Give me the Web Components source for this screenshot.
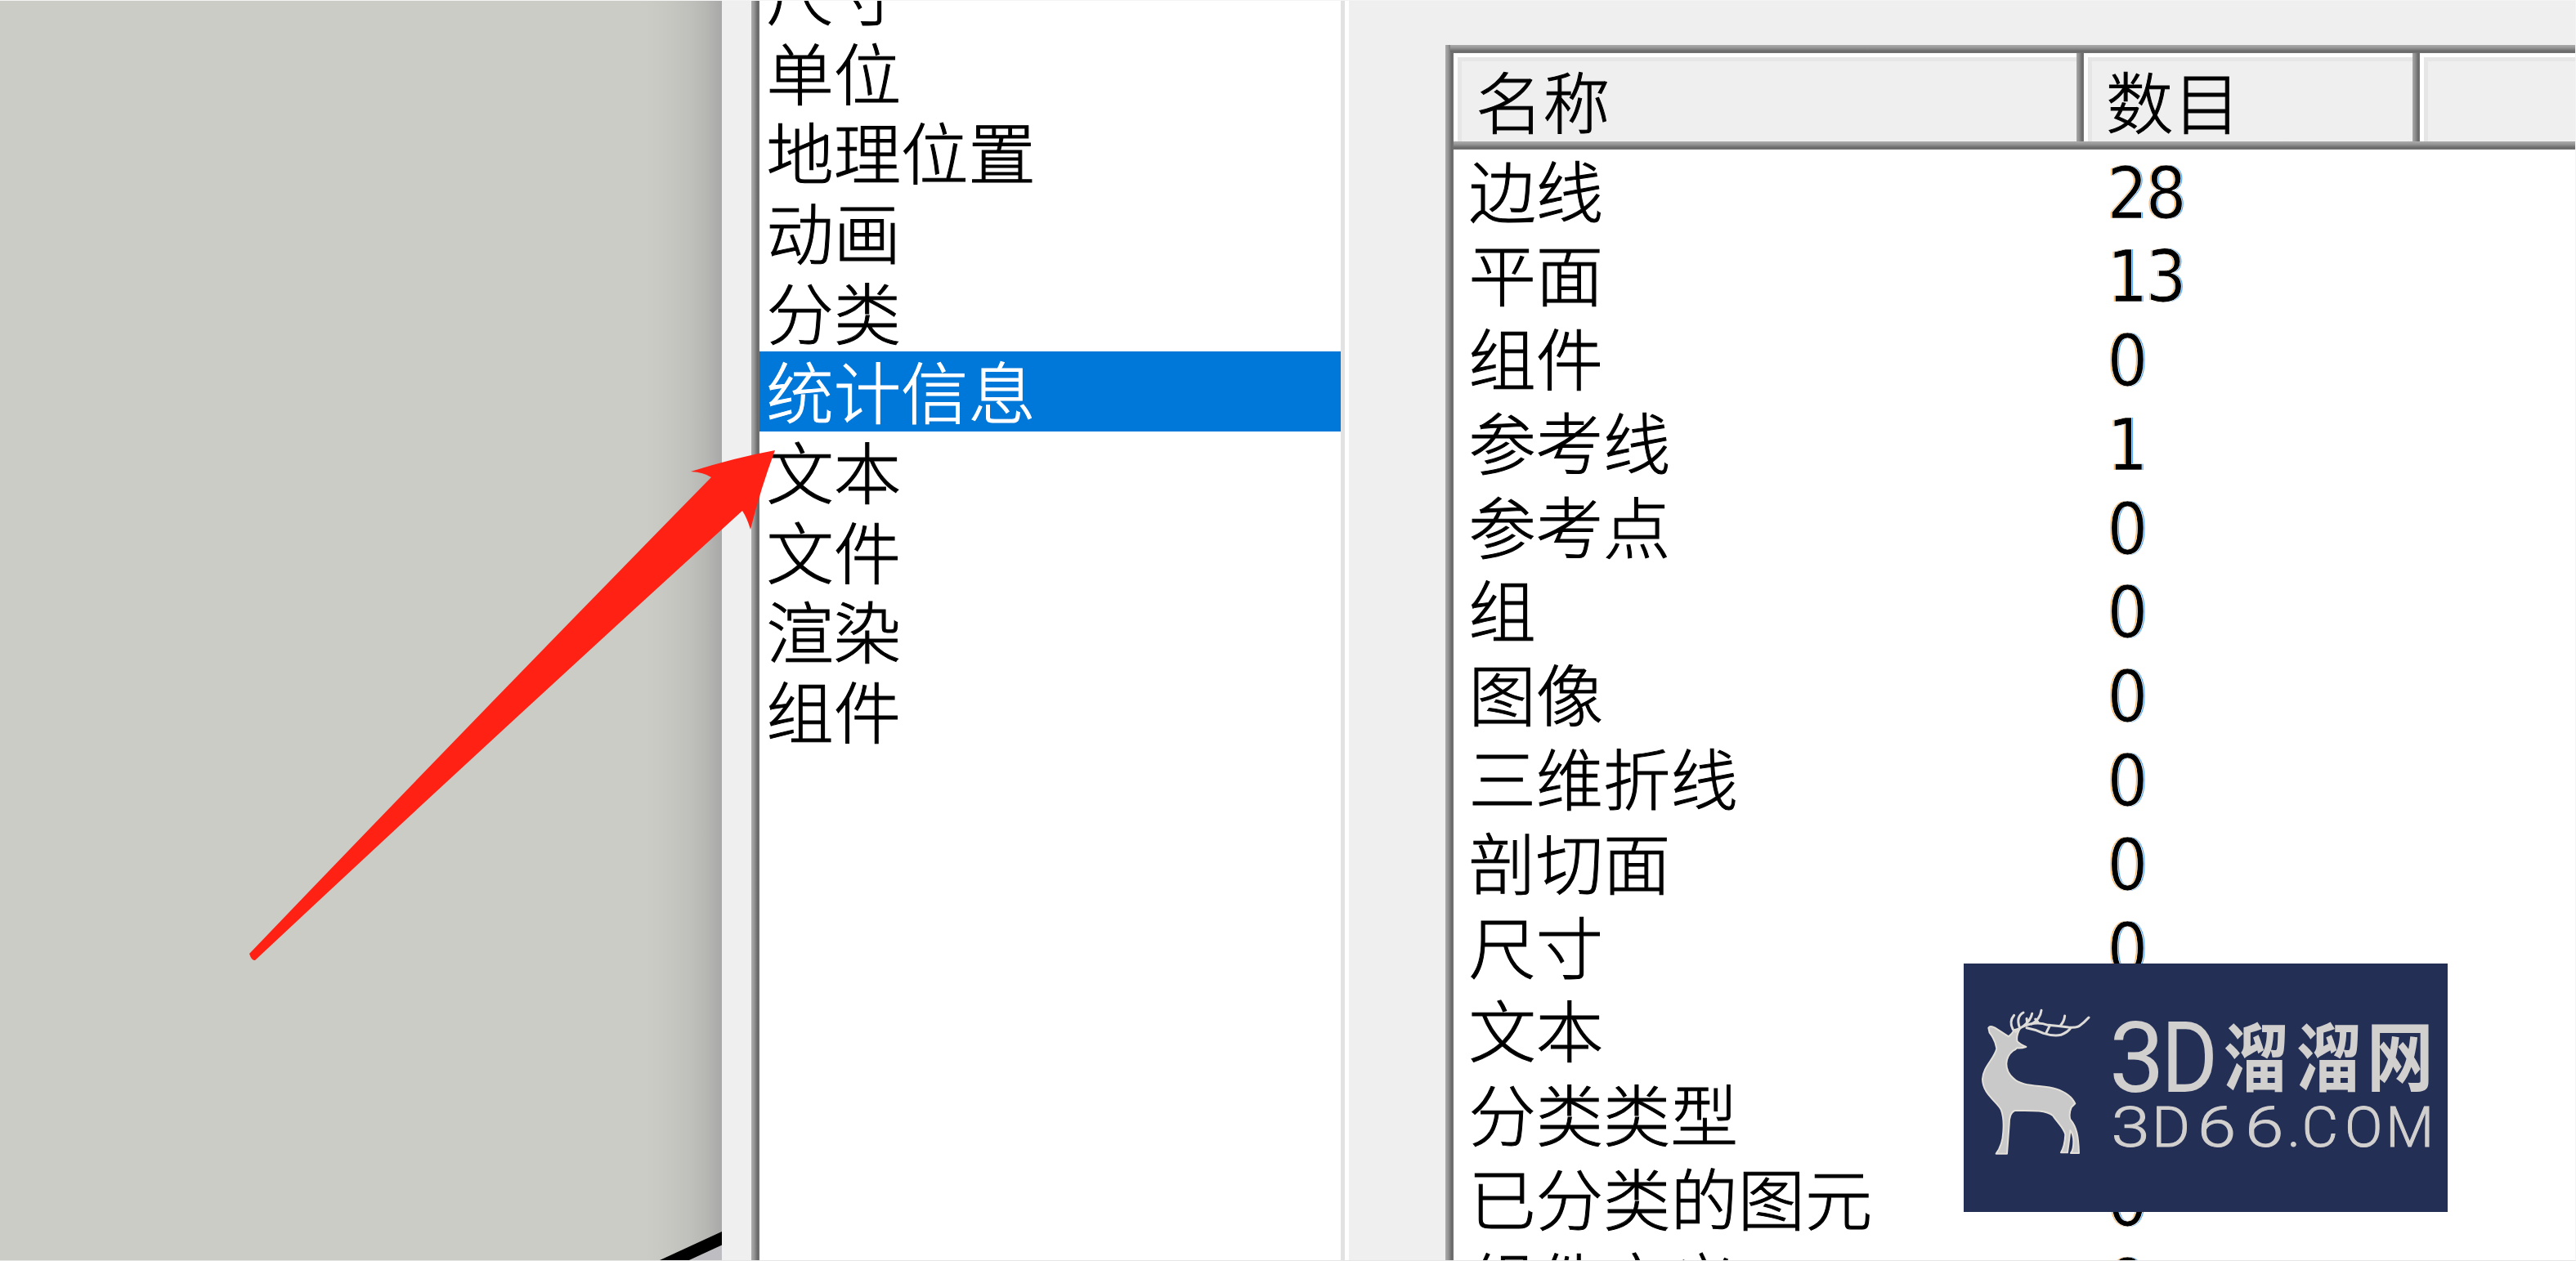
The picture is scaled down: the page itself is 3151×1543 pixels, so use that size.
<!DOCTYPE html>
<html lang="zh-CN">
<head>
<meta charset="utf-8">
<title>统计信息</title>
<style>
html,body{margin:0;height:100%;overflow:hidden;background:#efefef}
</style>
</head>
<body>
<model-window>
  <model-viewport></model-viewport>
  <category-list>
    <category-item>尺寸</category-item>
    <category-item>单位</category-item>
    <category-item>地理位置</category-item>
    <category-item>动画</category-item>
    <category-item>分类</category-item>
    <category-item selected>统计信息</category-item>
    <category-item>文本</category-item>
    <category-item>文件</category-item>
    <category-item>渲染</category-item>
    <category-item>组件</category-item>
  </category-list>
  <pane-divider></pane-divider>
  <stats-table>
    <header-cell slot="head" class="name">名称</header-cell>
    <header-cell slot="head" class="count">数目</header-cell>
    <header-cell slot="head" class="rest"></header-cell>
    <stats-row count="28">边线</stats-row>
    <stats-row count="13">平面</stats-row>
    <stats-row count="0">组件</stats-row>
    <stats-row count="1">参考线</stats-row>
    <stats-row count="0">参考点</stats-row>
    <stats-row count="0">组</stats-row>
    <stats-row count="0">图像</stats-row>
    <stats-row count="0">三维折线</stats-row>
    <stats-row count="0">剖切面</stats-row>
    <stats-row count="0">尺寸</stats-row>
    <stats-row count="">文本</stats-row>
    <stats-row count="">分类类型</stats-row>
    <stats-row count="0">已分类的图元</stats-row>
    <stats-row count="0">组件定义</stats-row>
  </stats-table>
  <pointer-arrow slot="overlay"></pointer-arrow>
  <brand-mark slot="overlay"></brand-mark>
</model-window>
<script>
const define = (name, html, setup) => {
  const t = document.createElement('template');
  t.innerHTML = html;
  customElements.define(name, class extends HTMLElement {
    constructor() {
      super();
      this.attachShadow({mode: 'open'}).appendChild(t.content.cloneNode(true));
    }
    connectedCallback() { if (setup) setup(this); }
  });
};

define('model-window', `
<style>
:host{position:relative;display:flex;width:3151px;height:1543px;overflow:hidden;box-sizing:border-box;background:#efefef;
  --bevel:#acacac,#959595 35%,#686868 78%,#747474;
  font:300 82.3px/1 "Noto Sans CJK SC","Noto Sans",sans-serif;color:#000;-webkit-text-stroke:1px currentColor}
.edge{position:absolute;inset:0;border:1px solid #f4f4f4;border-bottom-color:#e6e6e6;border-left:0;pointer-events:none}
</style>
<slot></slot><slot name="overlay"></slot><div class="edge"></div>`);

define('model-viewport', `
<style>
:host{display:block;flex:none;width:883px;height:100%;
  background:linear-gradient(90deg,#cbccc6 0,#cbccc6 790px,#c6c7c1 820px,#bfbfbb 845px,#b6b6b3 865px,#a8a8a8 883px)}
svg{display:block}
</style>
<svg width="883" height="1543" viewBox="0 0 883 1543">
<path d="M838 1543 883 1523V1543Z" fill="#bebec2"/>
<path d="M800 1553.500 890 1512" stroke="#000" stroke-width="15"/>
</svg>`);

define('category-list', `
<style>
:host{display:flex;flex:none;flex-direction:column;box-sizing:border-box;width:721px;height:100%;margin-left:36px;padding-left:10px;overflow:hidden;
  background:linear-gradient(90deg,var(--bevel)) 0 0/10px 100% no-repeat,#fff}
.items{display:flex;flex-direction:column;margin-top:-58.2px}
</style>
<div class="items"><slot></slot></div>`);

define('category-item', `
<style>
:host{display:block;flex:none;height:97.7px;line-height:94.2px;padding-left:8.5px;white-space:nowrap}
:host([selected]){background:#0078d9;color:#fff}
</style>
<slot></slot>`);

define('pane-divider', `
<style>
:host{display:block;flex:none;width:10px;height:100%;background:linear-gradient(90deg,#e2e2e2 0 5px,#fff 5px)}
</style>`);

define('stats-table', `
<style>
:host{display:flex;flex:1;flex-direction:column;margin:55px 0 0 118px;padding-left:10px;overflow:hidden;
  background:linear-gradient(90deg,var(--bevel)) 0 0/10px 100% no-repeat,#fff}
.rule{flex:none;height:10px;background:linear-gradient(var(--bevel))}
.top{margin-left:-4px}
.head{display:flex;flex:none;height:108px}
.head ::slotted(.name){width:771px}
.head ::slotted(.count){width:411px}
.head ::slotted(.rest){flex:1}
.body{display:flex;flex-direction:column;margin-top:-3.5px}
</style>
<div class="rule top"></div>
<div class="head"><slot name="head"></slot></div><div class="rule"></div>
<div class="body"><slot></slot></div>`);

define('header-cell', `
<style>
:host{display:flex;flex:none;box-sizing:border-box;height:108px;line-height:103px;white-space:nowrap}
.face{flex:1;box-sizing:border-box;padding-left:22px;background:#efefef;border-top:5px solid #fff;border-left:5px solid #fff;box-shadow:inset 5px 5px 0 #e6e6e6}
.split{flex:none;width:9px;background:linear-gradient(90deg,#a8a8a8,#8c8c8c 40%,#686868 80%,#7c7c7c)}
:host(.rest) .split{display:none}
</style>
<div class="face"><slot></slot></div><div class="split"></div>`);

define('stats-row', `
<style>
:host{display:flex;flex:none;height:102.8px;line-height:102.8px;white-space:nowrap}
.name{width:781px;padding-left:18.500px}
.count{font:400 87px/115.8px "DejaVu Sans Condensed","DejaVu Sans",sans-serif;font-stretch:condensed;letter-spacing:-2.500px;
  -webkit-text-stroke:.7px #fff;text-shadow:-1.500px 0 0 #ffb25a,1.500px 0 0 #4aa4ff}
</style>
<span class="name"><slot></slot></span><span class="count"></span>`,
el => { el.shadowRoot.querySelector('.count').textContent = el.getAttribute('count'); });

define('pointer-arrow', `
<style>
:host{position:absolute;left:300px;top:545px;display:block;width:660px;height:640px}
svg{display:block}
</style>
<svg width="660" height="640" viewBox="300 545 660 640">
<path d="M305 1167Q580 880 870 584Q861 578 845 577Q899 560 948 551Q930 599 918 648Q914 634 908 625Q610 896 312 1175Q308 1176 305 1167Z" fill="#ff2114"/>
</svg>`);

define('brand-mark', `
<style>
:host{position:absolute;left:2402px;top:1179px;display:block;width:592px;height:304px;background:#232f54;-webkit-text-stroke:0}
svg{display:block}
.big{font-family:Roboto,"Noto Sans CJK SC",sans-serif;font-weight:400}
.cjk{font-family:"Noto Sans CJK SC",sans-serif;font-weight:700}
.small{font-family:Roboto,sans-serif;font-weight:300}
</style>
<svg width="592" height="304" viewBox="0 0 592 304">
<g transform="translate(13 46) scale(.33333)" fill="#c9c9c9" stroke="#e4e0da" stroke-width="6" stroke-linejoin="round" stroke-linecap="round">
<path d="M52 98Q58 88 76 98L126 130Q140 118 146 106L168 100Q152 130 158 148Q168 158 190 168Q172 174 156 172Q150 180 142 182C112 206 108 250 142 282C176 318 250 306 300 322C336 334 360 354 370 376L356 390Q346 414 352 434C376 462 382 496 384 558L354 558Q364 546 364 516Q364 490 352 474Q350 500 342 556L318 556Q332 532 334 490C328 464 306 448 288 420C262 398 200 402 148 402Q128 410 128 452L120 560L80 560Q104 528 106 480Q110 430 98 398C82 368 30 340 30 286C32 240 74 212 82 174Q78 144 56 116Z"/>
<g fill="none" stroke="#dedcd8" stroke-width="9">
<path d="M152 112Q170 92 206 84Q240 76 270 88Q310 92 346 96Q372 98 384 92Q404 78 420 60"/>
<path d="M192 98Q226 104 254 118Q292 130 318 124Q344 114 354 98"/>
<path d="M142 104Q126 76 146 52M166 96Q152 58 180 42M190 88Q196 76 192 64M180 92Q206 72 212 46M210 84Q242 66 246 34M234 78Q230 70 224 66M278 88 264 116M316 90Q330 74 332 54"/>
</g>
</g>
<g transform="translate(173 56) scale(.33333)" fill="#d2d0ce">
<g class="big">
<text transform="translate(14 302) scale(1 1)" font-size="364">3</text>
<text transform="translate(206 302) scale(.87 1)" font-size="364">D</text>
</g>
<g class="cjk" font-size="240">
<text transform="translate(434 279) scale(1 1.13)">溜</text>
<text transform="translate(702 279) scale(1 1.13)">溜</text>
<text transform="translate(960 279) scale(1.02 1.17)">网</text>
</g>
<g class="small" font-size="204" stroke="#d2d0ce" stroke-width="3">
<text transform="translate(0 503) scale(1.25 1)" x="18">3</text>
<text x="172" y="503" textLength="140" lengthAdjust="spacingAndGlyphs">D</text>
<text transform="translate(0 503) scale(1.25 1)" x="271 411">66</text>
<text y="503" x="668 722 880 1030">.COM</text>
</g>
</g>
</svg>`);
</script>
</body>
</html>
